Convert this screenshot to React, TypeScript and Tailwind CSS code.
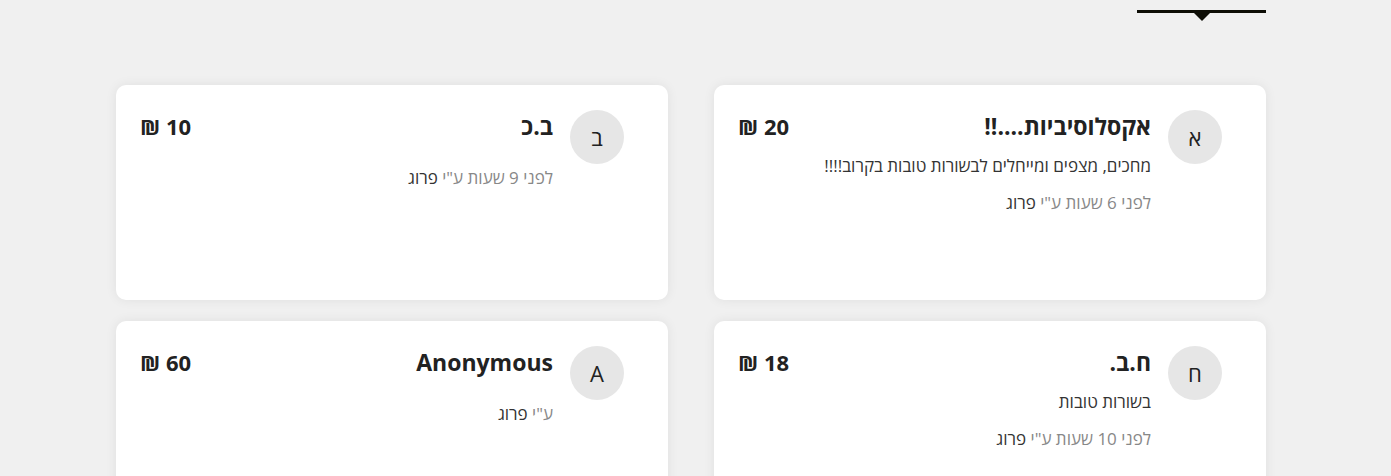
import React from "react";

type Donation = {
  initial: string;
  name: string;
  amount: number;
  message?: string;
  time?: string;
};

const donations: Donation[] = [
  {
    initial: "א",
    name: "אקסלוסיביות....!!",
    amount: 20,
    message: "מחכים, מצפים ומייחלים לבשורות טובות בקרוב!!!!",
    time: "לפני 6 שעות",
  },
  { initial: "ב", name: "ב.כ", amount: 10, time: "לפני 9 שעות" },
  {
    initial: "ח",
    name: "ח.ב.",
    amount: 18,
    message: "בשורות טובות",
    time: "לפני 10 שעות",
  },
  { initial: "A", name: "Anonymous", amount: 60 },
];

function DonationCard({ d }: { d: Donation }) {
  return (
    <div className="h-[215px] bg-white rounded-[10px] shadow-[0_0_12px_rgba(0,0,0,0.07)] flex items-start pt-[25px] pr-[44px] pl-6">
      <div className="w-[54px] h-[54px] shrink-0 rounded-full bg-[#e6e6e6] flex items-center justify-center text-[22px] text-[#222]">
        {d.initial}
      </div>
      <div className="flex-1 mr-[17px]">
        <div className="flex items-center justify-between h-8">
          <div className="text-[23px] font-bold text-[#222] leading-8">{d.name}</div>
          <div dir="ltr" className="text-[22px] font-bold text-[#222] leading-8">
            ₪ {d.amount}
          </div>
        </div>
        {d.message && (
          <p className="mt-3 text-[17px] leading-6 text-[#333]">{d.message}</p>
        )}
        <p className={`${d.message ? "mt-[13px]" : "mt-6"} text-[17px] leading-6 text-[#888]`}>
          {d.time ? `${d.time} ` : ""}ע"י <span className="text-[#333]">פרוג</span>
        </p>
      </div>
    </div>
  );
}

export default function App() {
  return (
    <div
      dir="rtl"
      className="min-h-[476px] bg-[#f0f0f0] pr-[125px] pt-[10px] font-['Open_Sans','Liberation_Sans',sans-serif]"
    >
      <div className="w-[1150px]">
        <div className="w-[129px] relative">
          <div className="h-[3px] bg-[#0d0d05]" />
          <div className="absolute left-1/2 -translate-x-1/2 top-[3px] w-0 h-0 border-l-[8px] border-r-[8px] border-t-[8px] border-l-transparent border-r-transparent border-t-[#0d0d05]" />
        </div>
        <div className="mt-[72px] grid grid-cols-[552px_552px] gap-x-[46px] gap-y-[21px]">
          {donations.map((d, i) => (
            <DonationCard key={i} d={d} />
          ))}
        </div>
      </div>
    </div>
  );
}
